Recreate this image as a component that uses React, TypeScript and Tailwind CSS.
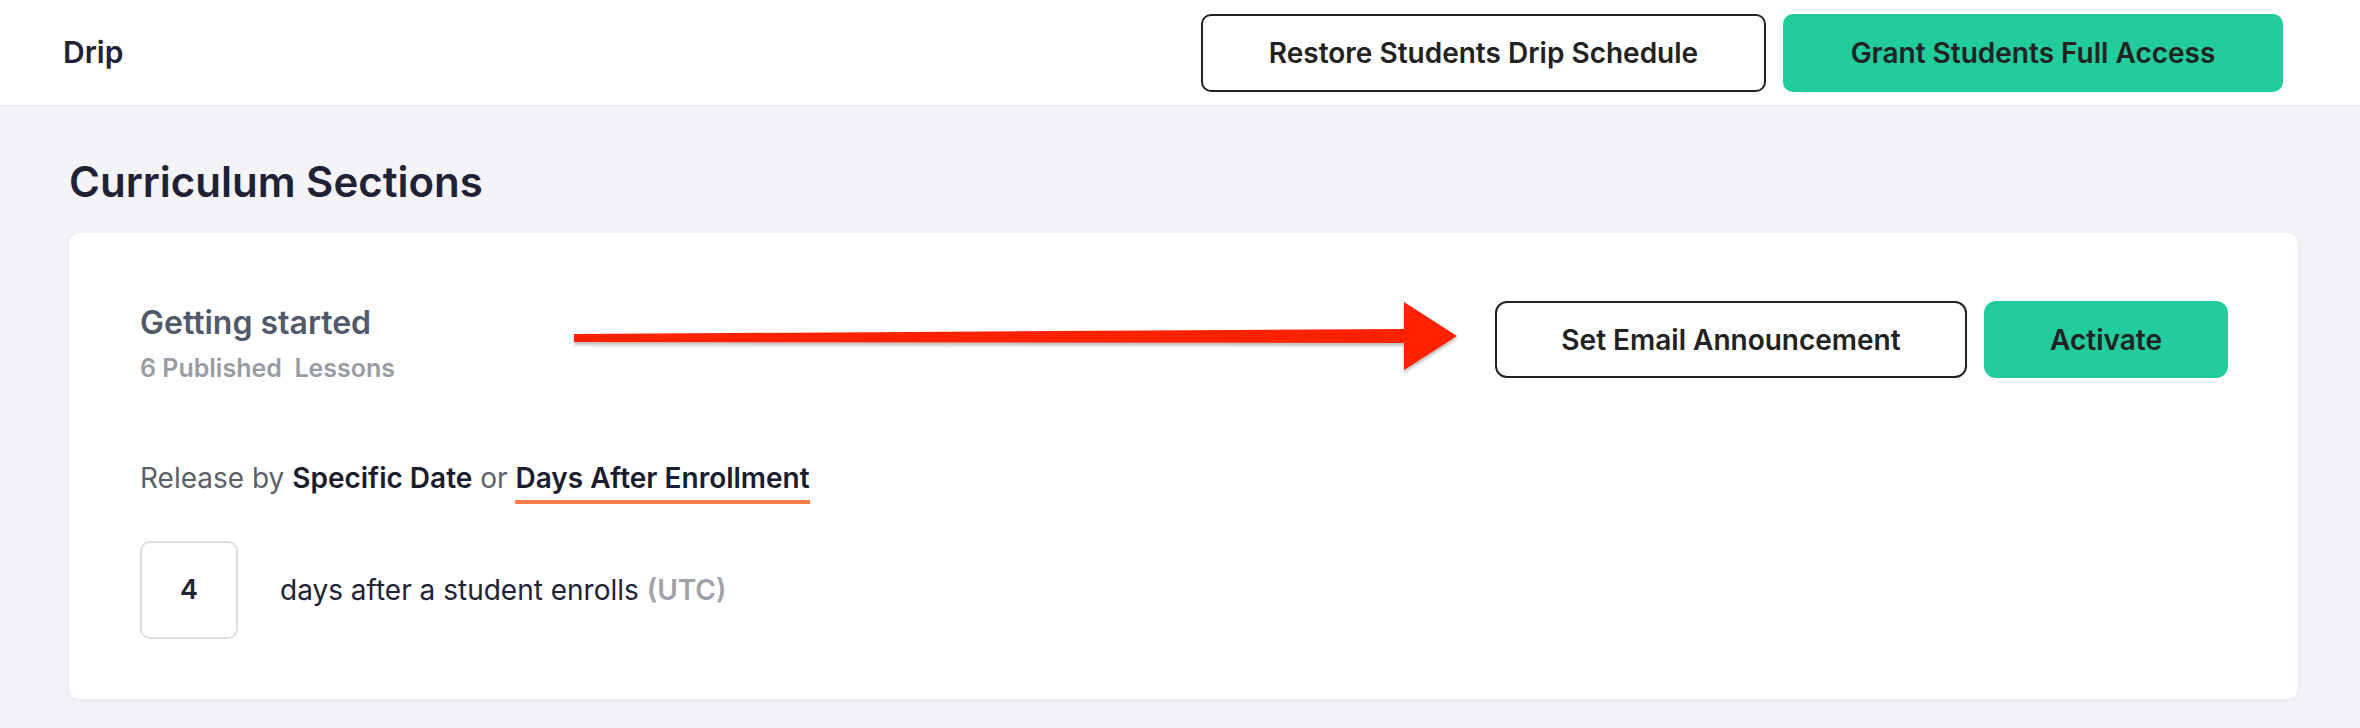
import React from "react";

// Red annotation arrow drawn over the card
function AnnotationArrow() {
  return (
    <svg
      className="pointer-events-none absolute left-0 top-0"
      width="2360"
      height="728"
      viewBox="0 0 2360 728"
    >
      <defs>
        <filter id="arrowShadow" x="-5%" y="-50%" width="110%" height="200%">
          <feDropShadow dx="0" dy="3" stdDeviation="1.5" floodColor="#000" floodOpacity="0.25" />
        </filter>
      </defs>
      <polygon
        points="574,334 1404,329 1404,302 1457,336 1404,370 1404,343 574,342"
        fill="#ff2200"
        filter="url(#arrowShadow)"
      />
    </svg>
  );
}

export default function App() {
  return (
    <div
      className="relative min-h-[728px] w-full bg-[#f4f4f8] text-[#1f2235]"
      style={{ fontFamily: "Inter, 'Noto Sans', sans-serif" }}
    >
      {/* Top bar */}
      <header className="flex h-[107px] items-center justify-between border-b-2 border-[#ececf1] bg-white pl-[63px] pr-[77px]">
        <h1 className="text-[30px] font-semibold text-[#1f2235]">Drip</h1>
        <div className="flex items-center gap-[17px]">
          <button className="h-[78px] w-[565px] rounded-[10px] border-2 border-[#222] bg-white text-[28px] font-semibold text-[#222]">
            Restore Students Drip Schedule
          </button>
          <button className="h-[78px] w-[500px] rounded-[10px] bg-[#22cc9d] text-[28px] font-semibold text-[#222]">
            Grant Students Full Access
          </button>
        </div>
      </header>

      <main className="pl-[69px] pr-[62px]">
        <h2 className="pt-[47px] pb-[23px] text-[42px] font-semibold leading-[56px] text-[#1f2235]">
          Curriculum Sections
        </h2>

        <section className="rounded-[10px] bg-white pb-[60px] pl-[71px] pr-[70px] pt-[68px] shadow-[0_1px_4px_rgba(20,20,50,0.08)]">
          <div className="flex items-start justify-between">
            <div className="pt-[4px]">
              <h3 className="text-[32px] font-semibold leading-[36px] text-[#505a6b]">Getting started</h3>
              <p className="mt-[13px] whitespace-pre text-[25px] font-semibold leading-[28px] text-[#9a9ca4]">
                6 Published  Lessons
              </p>
            </div>
            <div className="flex items-center gap-[17px]">
              <button className="h-[77px] w-[472px] rounded-[12px] border-2 border-[#222] bg-white text-[28px] font-semibold text-[#222]">
                Set Email Announcement
              </button>
              <button className="h-[77px] w-[244px] rounded-[12px] bg-[#22cc9d] text-[28px] font-semibold text-[#222]">
                Activate
              </button>
            </div>
          </div>

          <p className="mt-[80px] text-[28px] leading-[33px] text-[#5c5f68]">
            Release by <span className="font-semibold text-[#1a1d2e]">Specific Date</span> or{" "}
            <span className="inline-block border-b-4 border-[#ff7b47] pb-[5px] font-semibold text-[#1a1d2e]">
              Days After Enrollment
            </span>
          </p>

          <div className="mt-[37px] flex items-center gap-[42px]">
            <div className="flex h-[98px] w-[98px] items-center justify-center rounded-[10px] border-2 border-[#dedee2] text-[27px] font-semibold text-[#1f2235]">
              4
            </div>
            <p className="text-[28px] text-[#1f2235]">
              days after a student enrolls <span className="font-semibold text-[#a0a1a9]">(UTC)</span>
            </p>
          </div>
        </section>
      </main>

      <AnnotationArrow />
    </div>
  );
}
